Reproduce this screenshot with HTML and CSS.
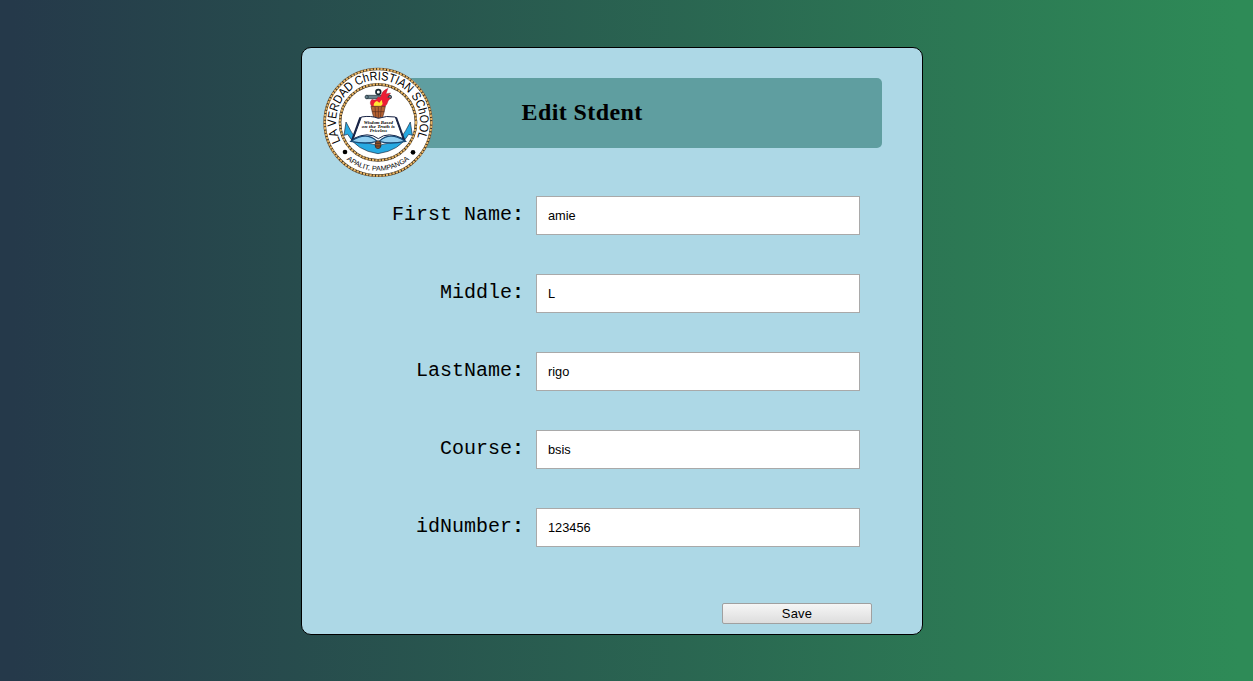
FILE: index.html
```
<!DOCTYPE html>
<html lang="en">
<head>
<meta charset="utf-8">
<title>Edit Student</title>
<link rel="stylesheet" href="styles.css">
</head>
<body>
<main class="card">
  <svg class="seal" viewBox="0 0 360 360" role="img" aria-label="School seal">
    <defs>
      <path id="arc-top" d="M68 238A126 126 0 1 1 296 230"/>
      <path id="arc-bottom" d="M55 256A146 146 0 0 0 305 256"/>
    </defs>
    <circle cx="180" cy="181" r="164" fill="#fff"/>
    <circle class="rope-edge" cx="180" cy="181" r="160"/>
    <circle class="rope" cx="180" cy="181" r="160"/>
    <circle class="rope-edge" cx="180" cy="181" r="114"/>
    <circle class="rope" cx="180" cy="181" r="114"/>
    <text class="seal-name"><textPath href="#arc-top" textLength="502" lengthAdjust="spacingAndGlyphs">LA VERDAD ChRISTIAN SChOOL</textPath></text>
    <text class="seal-place"><textPath href="#arc-bottom" startOffset="50%" text-anchor="middle" textLength="204" lengthAdjust="spacingAndGlyphs">APALIT, PAMPANGA</textPath></text>
    <circle cx="81" cy="270" r="7"/>
    <circle cx="285" cy="271" r="7"/>
    <path d="M78 220L84 180L98 206Q110 238 170 248L180 258L191 248Q248 240 263 206L277 180L283 220L272 217Q245 266 180 275Q116 266 89 217Z" fill="#27a9e1" stroke="#182840" stroke-width="2"/>
    <path d="M145 100H217V110H145Z" fill="#68838d" stroke="#172630" stroke-width="2"/>
    <circle cx="146" cy="105" r="5" fill="#68838d" stroke="#172630" stroke-width="2"/>
    <circle cx="216" cy="105" r="5" fill="#68838d" stroke="#172630" stroke-width="2"/>
    <circle cx="181" cy="90" r="7" fill="#fff" stroke="#172630" stroke-width="5"/>
    <path d="M163 135Q151 123 162 112Q175 118 180 104Q187 110 190 98Q193 86 210 79L204 95L218 93L207 107L218 107Q209 116 207 126L198 137Z" fill="#ed1c35" stroke="#80202a" stroke-width="1"/>
    <path d="M167 132Q166 121 177 117L184 122L191 113L194 126L187 135Z" fill="#ffe735"/>
    <path d="M159 133H202L198 151L192 172H169L163 151Z" fill="#b76332" stroke="#512b20" stroke-width="2"/>
    <path d="M162 149H199M171 135L174 170M181 135V170M190 135L187 170" fill="none" stroke="#5a2d1e" stroke-width="2"/>
    <path d="M97 240L124 166L133 165L110 230ZM264 240L237 166L228 165L251 230Z" fill="#172345"/>
    <path d="M106 230L130 165Q160 160 181 169Q205 160 232 165L255 230Q210 207 181 230Q151 207 106 230Z" fill="#fff" stroke="#172345" stroke-width="3"/>
    <path d="M99 238Q145 207 177 238Q145 248 99 238ZM184 238Q215 207 262 238Q214 248 184 238Z" fill="#91cff0" stroke="#174977" stroke-width="4"/>
    <ellipse cx="180" cy="248" rx="9" ry="12" fill="#945126" stroke="#24252c" stroke-width="2"/>
    <path d="M171 244H190M171 252H190" stroke="#24252c" stroke-width="2"/>
    <g class="seal-motto">
      <text x="181" y="185" textLength="88" lengthAdjust="spacingAndGlyphs">Wisdom Based</text>
      <text x="181" y="198" textLength="99" lengthAdjust="spacingAndGlyphs">on the Truth is</text>
      <text x="181" y="211" textLength="52" lengthAdjust="spacingAndGlyphs">Priceless</text>
    </g>
  </svg>
  <header class="banner"><h1 class="title">Edit Stdent</h1></header>
  <form class="form">
    <div class="row"><label class="label" for="first">First Name<b class="colon">:</b></label><input class="field" id="first" value="amie"></div>
    <div class="row"><label class="label" for="middle">Middle<b class="colon">:</b></label><input class="field" id="middle" value="L"></div>
    <div class="row"><label class="label" for="last">LastName<b class="colon">:</b></label><input class="field" id="last" value="rigo"></div>
    <div class="row"><label class="label" for="course">Course<b class="colon">:</b></label><input class="field" id="course" value="bsis"></div>
    <div class="row"><label class="label" for="number">idNumber<b class="colon">:</b></label><input class="field" id="number" value="123456"></div>
    <button class="save" type="button">Save</button>
  </form>
</main>
</body>
</html>
```
FILE: styles.css
```
* { box-sizing: border-box; }
body {
  margin: 0;
  height: 681px;
  padding: 47px 0 0 301px;
  overflow: hidden;
  background: linear-gradient(to right, #25394a 1%, #2e8b57 99%);
}
.card {
  position: relative;
  width: 622px;
  height: 588px;
  padding: 30px 40px 0;
  border: 1px solid #000;
  border-radius: 10px;
  background: #add8e6;
}
.seal {
  position: absolute;
  left: 16px;
  top: 14px;
  width: 120px;
  height: 120px;
}
.rope-edge { fill: none; stroke: #3c3021; stroke-width: 8; }
.rope { fill: none; stroke: #e9b665; stroke-width: 6; stroke-dasharray: 7 3; }
.seal-name { font: 37px "Liberation Sans", Arial, sans-serif; }
.seal-place { font: 21px "Liberation Sans", Arial, sans-serif; }
.seal-motto { font: italic bold 12px "Liberation Serif", "Times New Roman", serif; text-anchor: middle; }
.banner {
  height: 70px;
  padding: 20px 0 0 179.5px;
  border-radius: 5px;
  background: #5f9ea0;
}
.title {
  margin: 0;
  font: bold 24px/28px "Liberation Serif", "Times New Roman", serif;
  letter-spacing: 0.4px;
}
.form { display: flex; flex-direction: column; gap: 39px; padding: 48px 21px 0 0; }
.row { display: flex; gap: 12px; height: 39px; }
.label {
  width: 182px;
  padding-top: 7px;
  text-align: right;
  font: 20px/23px "Liberation Mono", "Courier New", monospace;
}
.colon { font-weight: bold; }
.field {
  width: 324px;
  height: 39px;
  padding: 0 11px;
  border: 1px solid #a9a9a9;
  background: #fff;
  color: #000;
  font: 12.8px "Liberation Sans", Arial, sans-serif;
}
.save {
  align-self: flex-end;
  width: 150px;
  height: 21px;
  margin: 17px -11px 0 0;
  padding: 0;
  border: 1px solid #a0a0a0;
  border-radius: 2px;
  background: linear-gradient(#f6f6f6, #dddddd);
  color: #000;
  font: 13px "Liberation Sans", Arial, sans-serif;
  letter-spacing: 0.2px;
}
```
